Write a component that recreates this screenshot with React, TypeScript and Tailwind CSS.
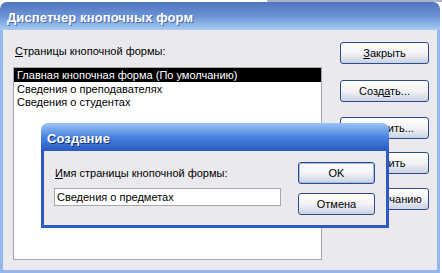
import type { ReactNode } from "react";

const xpButton =
  "flex items-center justify-center rounded-[3px] border border-[#2b4c91] bg-gradient-to-b from-white via-[#f3f3f5] to-[#c9d2e3] text-[11px] text-black";

function Btn({ children, className = "" }: { children: ReactNode; className?: string }) {
  return <div className={`${xpButton} ${className}`}>{children}</div>;
}

export default function App() {
  return (
    <div className="w-[442px] h-[273px] overflow-hidden bg-white font-['Liberation_Sans',sans-serif] text-[11px] leading-[13px] text-black">
      {/* fragment of what lies behind the window */}
      <div className="flex h-[2px]">
        <div className="w-[267px] bg-white" />
        <div className="flex-1 bg-[#aab4c6]" />
      </div>

      <div className="relative flex h-[271px] w-[440px] flex-col overflow-hidden rounded-t-[7px]">
        {/* title bar (inactive) */}
        <div className="flex h-[28px] items-center bg-gradient-to-b from-[#5174c0] via-[#6a93d6] to-[#a8ccf2] pl-[7px] pt-[2px]">
          <span className="text-[13px] font-bold tracking-[0.1px] text-white [text-shadow:1px_1px_0_#4a68a8]">
            Диспетчер кнопочных форм
          </span>
        </div>

        {/* body */}
        <div className="flex flex-1 border-x-[3px] border-b-[3px] border-[#93b6ec] bg-[#ebe9ed] pl-[10px] pt-[12px]">
          <div className="w-[309px] pt-[2px]">
            <div className="h-[13px] pl-[2px] pt-[1px]">
              <u>С</u>траницы кнопочной формы:
            </div>
            <div className="mt-[10px] h-[193px] border border-[#a7a7ab] bg-white">
              <div className="h-[14px] bg-black pl-[3px] pt-[1px] text-white">Главная кнопочная форма (По умолчанию)</div>
              <div className="h-[13px] pl-[3px] pt-[1px]">Сведения о преподавателях</div>
              <div className="h-[13px] pl-[3px] pt-[1px]">Сведения о студентах</div>
            </div>
          </div>

          <div className="ml-[18px] flex flex-col">
            <Btn className="h-[22px] w-[89px]">
              <span><u>З</u>акрыть</span>
            </Btn>
            <Btn className="mt-[16px] h-[22px] w-[89px]">
              <span>Созд<u>а</u>ть...</span>
            </Btn>
            <Btn className="mt-[15px] h-[22px] w-[89px]">
              <span>Изменить...</span>
            </Btn>
            <Btn className="mt-[13px] h-[22px] w-[89px]">
              <span>Удалить</span>
            </Btn>
            <Btn className="mt-[14px] h-[22px] w-[89px]">
              <span>По умолчанию</span>
            </Btn>
          </div>
        </div>

        {/* nested "Создание" dialog, lying over the manager */}
        <div className="absolute left-[41px] top-[121px] flex h-[105px] w-[348px] flex-col overflow-hidden rounded-t-[7px]">
          <div className="flex h-[28px] items-center bg-gradient-to-b from-[#9ac4f6] via-[#4a83df] to-[#2a5ac2] pl-[6px] pt-[2px]">
            <span className="text-[13px] font-bold tracking-[0.1px] text-white [text-shadow:1px_1px_0_#0f2f7f]">
              Создание
            </span>
          </div>
          <div className="flex flex-1 border-x-[3px] border-b-[3px] border-[#2c5bc4] bg-[#ebe9ed] pl-[10px]">
            <div className="pt-[16px]">
              <div className="h-[13px] pl-[1px]">
                <u>И</u>мя страницы кнопочной формы:
              </div>
              <div className="mt-[8px] h-[18px] w-[227px] border border-[#a7a7ab] bg-white pl-[2px] pt-[2px]">
                Сведения о предметах
              </div>
            </div>
            <div className="ml-[17px] flex flex-col pt-[11px]">
              <Btn className="h-[22px] w-[77px] border-[#1d3f8c] shadow-[inset_0_0_0_1px_#9ebbeb]">OK</Btn>
              <Btn className="mt-[9px] h-[22px] w-[77px]">Отмена</Btn>
            </div>
          </div>
        </div>
      </div>
    </div>
  );
}
